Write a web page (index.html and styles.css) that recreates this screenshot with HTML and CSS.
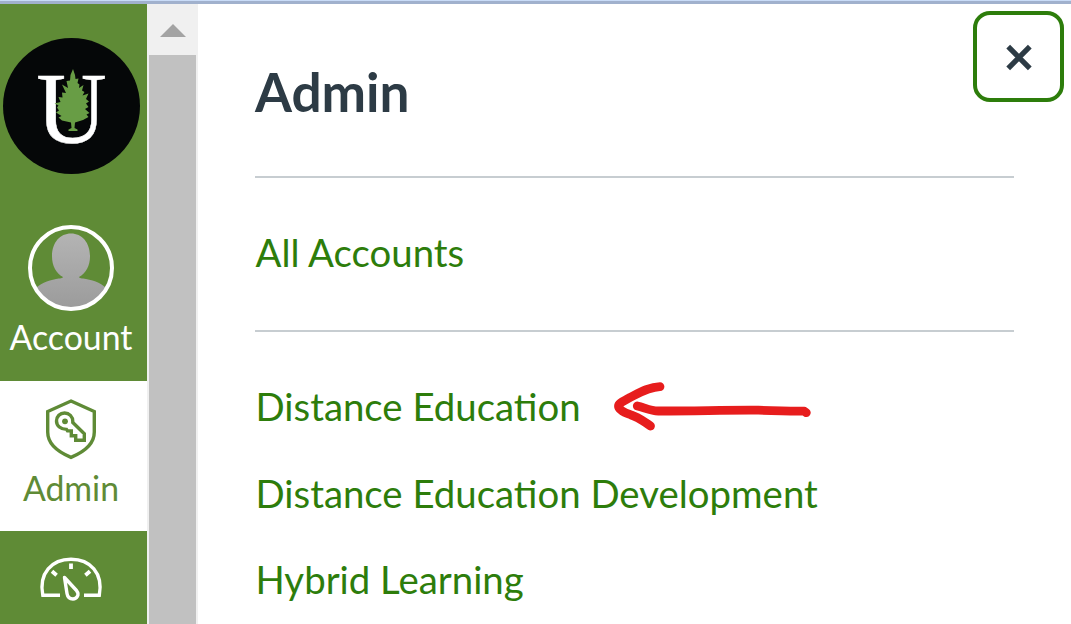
FILE: index.html
```html
<!DOCTYPE html>
<html lang="en">
<head>
<meta charset="utf-8">
<title>Admin</title>
<link rel="stylesheet" href="styles.css">
</head>
<body>
<div class="topline"></div>
<div class="app">
  <nav class="sidebar">
    <a class="brand" aria-label="Home">
      <svg width="138" height="138" viewBox="2 37 138 138">
        <ellipse cx="71.5" cy="106" rx="68.5" ry="68" fill="#050708"/>
        <text class="brand-letter" x="36.300" y="142.500" textLength="70.500" lengthAdjust="spacingAndGlyphs">U</text>
        <path fill="#689d45" d="M73 69L75 75 75.500 79 78.500 78.500 77.500 83 79.500 84.500 79 88 83.500 85 82 90.500 84.500 92 82.500 95.500 88.500 93.500 86 99 89 101.500 86 103.500 88.500 107 85 109 89.500 113 86.500 114.500 88.500 117 83 120 75 122.500 74.500 128 77.500 129.500V131H68.500V129.500L71.500 128 71 122.500 62 120.500 58.500 117.500 61.500 116 56 112.500 59 110.500 57 107.500 58.500 105.500 54.500 103.500 60.500 102 58.500 97 62.500 97.500 62 92.500 66 93 62 84.500 68 88 66.500 81 70 80.500 70.500 75z"/>
      </svg>
    </a>
    <a class="item account">
      <svg width="86" height="86" viewBox="0 0 86 86">
        <defs>
          <clipPath id="ring"><circle cx="43" cy="43" r="40"/></clipPath>
          <linearGradient id="grey" x1="0" y1="8" x2="0" y2="84" gradientUnits="userSpaceOnUse"><stop stop-color="#b4b4b4"/><stop offset="1" stop-color="#9b9b9b"/></linearGradient>
        </defs>
        <path clip-path="url(#ring)" fill="url(#grey)" d="M43 8.500c11 0 19 9 19 23 0 9-4 17-11 20.500 0 1 3 1.500 7 2 9 1.500 17 5 22 11V86H6V65c5-6 14-9.500 22-11 4-.5 7-1 7-2-7-3.500-11-11.500-11-20.500 0-14 8-23 19-23z"/>
        <circle cx="43" cy="43" r="41" fill="none" stroke="#fff" stroke-width="4"/>
      </svg>
      <span class="label">Account</span>
    </a>
    <a class="item admin">
      <svg width="52" height="62" viewBox="45 398 52 62" fill="none" stroke="#5f8b36" stroke-width="3.400">
        <path d="M71 401l23.300 10.500V432c0 12-9 19.500-23.300 25.300C56.700 451.500 47.700 444 47.700 432v-20.500z"/>
        <path d="M72.800 422.500l11.500 11.300v6.500h-8.600v-4.600h-4.400v-4.800h-3.800l-1-1.500c-5.800 0-10-3.500-10-8.300 0-4.800 3.500-8.100 8.100-8.100s8.200 3.500 8.200 8.500z"/>
        <circle cx="65" cy="421.300" r="2.900" fill="#5f8b36" stroke="none"/>
      </svg>
      <span class="label">Admin</span>
    </a>
    <a class="item dashboard" aria-label="Dashboard">
      <svg width="64" height="46" viewBox="39 556 64 46" fill="none" stroke="#fff" stroke-width="3.400">
        <path d="M60 595.300H42.800C38.500 573 52 559.300 71 559.300S103.500 573 99.300 595.300H84"/>
        <path stroke-width="3.800" d="M71 563.500v5.500M52 571.200l4.600 4M90 571.200l-4.600 4"/>
        <path stroke-linejoin="round" d="M64.500 577.500l12 13c3.500 4.500 0 8.500-3.500 8.500-4 0-5.500-2.500-6-5.500z"/>
      </svg>
    </a>
  </nav>
  <div class="scrollbar">
    <svg class="arrow-up" width="26" height="13" viewBox="0 0 26 13"><path fill="#a3a3a3" d="M0 13L13 0l13 13z"/></svg>
    <div class="thumb"></div>
  </div>
  <main class="tray">
    <button class="close" aria-label="Close">
      <svg width="26" height="26" viewBox="0 0 26 26"><path d="M2.200 2.700l21.600 21.600M23.800 2.700L2.200 24.300" stroke="#2d3b45" stroke-width="5.300"/></svg>
    </button>
    <h1>Admin</h1>
    <hr>
    <a class="link all">All Accounts</a>
    <hr>
    <ul class="accounts">
      <li><a class="link">Distance Education</a>
        <svg class="pointer" width="200" height="52" viewBox="612 380 200 52" fill="none" stroke="#e71d1d" stroke-width="8.800" stroke-linecap="round" stroke-linejoin="round">
          <path d="M660 386.700c-11 .3-21 6.300-31 11.300-5 3-10.500 5-10.500 8 0 3.500 5.500 6.500 12 8.700 9 2.800 13 6.800 20 11.300"/>
          <path d="M637.300 406c7 1.500 13 5 21 5 45 0 60-1 100-.8 22 .6 32 1 46 1l2 1.500"/>
        </svg>
      </li>
      <li><a class="link">Distance Education Development</a></li>
      <li><a class="link">Hybrid Learning</a></li>
    </ul>
  </main>
</div>
</body>
</html>
```
FILE: styles.css
```css
* { box-sizing: border-box; }
body {
  margin: 0;
  height: 624px;
  overflow: hidden;
  display: flex;
  flex-direction: column;
  background: #fff;
  font-family: Lato, "Open Sans", sans-serif;
}
svg { display: block; flex: none; overflow: visible; }
.topline { height: 4px; flex: none; background: #a1b1cd; border-top: 1px solid #c9dcf8; }
.app { display: flex; flex: 1; min-height: 0; }
.sidebar { width: 147px; flex: none; background: #5f8b36; color: #fff; overflow: hidden; }
.brand { display: block; padding: 33px 0 0 2px; height: 221px; }
.brand-letter { font-family: "Liberation Serif", serif; font-size: 101px; fill: #fff; stroke: #fff; stroke-width: 0.5px; }
.item { display: flex; flex-direction: column; align-items: center; padding-right: 5px; }
.label { font-size: 33.800px; line-height: 40px; white-space: nowrap; }
.account { height: 156px; }
.account .label { margin-top: 6px; }
.admin { height: 150px; padding-top: 17px; background: #fff; color: #5f8b36; }
.admin .label { margin-top: 8px; }
.dashboard { padding-top: 25px; }
.scrollbar {
  width: 51px;
  flex: none;
  display: flex;
  flex-direction: column;
  align-items: center;
  padding: 20px 2px 0;
  background: #f0f0f0;
}
.arrow-up { margin-bottom: 18px; }
.thumb { width: 47px; flex: 1; background: #c1c1c1; }
.tray { position: relative; flex: 1; padding: 55px 57px 0; }
h1 { margin: 0 0 53px; font-size: 53.200px; line-height: 64px; font-weight: 700; color: #2d3b45; }
hr { margin: 0; border: 0; height: 2px; background: #c7cdd1; }
.link { font-size: 38.380px; line-height: 46px; color: #2d7d0b; white-space: nowrap; padding-left: 0.500px; }
.all { display: block; margin: 51px 0 55px; }
.accounts { list-style: none; margin: 51px 0 0; padding: 0; display: flex; flex-direction: column; gap: 40.500px; }
.accounts li { display: flex; height: 46px; }
.pointer { margin: -3px 0 0 31px; }
.close {
  position: absolute;
  top: 7px;
  right: 7px;
  width: 91px;
  height: 91px;
  padding: 0;
  display: grid;
  place-items: center;
  background: #fff;
  border: 4px solid #2d7d0b;
  border-radius: 17px;
}
```
